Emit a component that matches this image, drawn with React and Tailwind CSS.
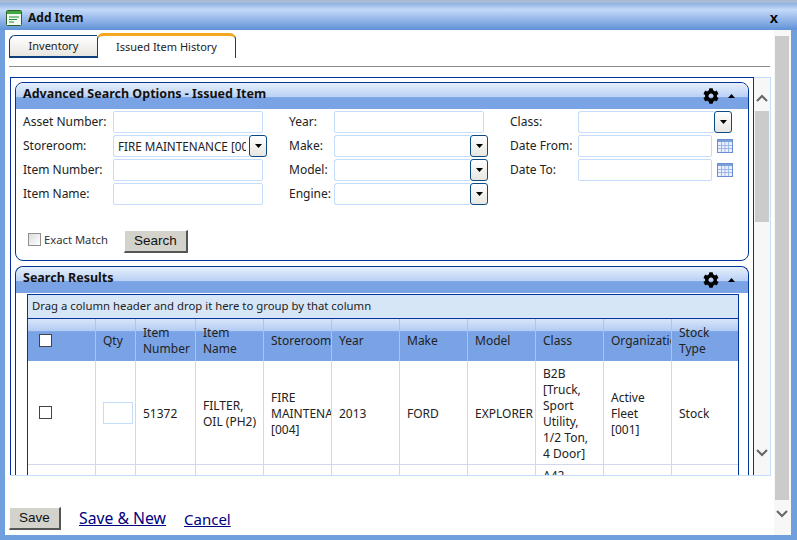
import { FaCog } from 'react-icons/fa';

const COLS = [
  { label: 'Qty', w: 'w-[40px]' },
  { label: 'Item Number', w: 'w-[60px]' },
  { label: 'Item Name', w: 'w-[68px]' },
  { label: 'Storeroom', w: 'w-[68px]' },
  { label: 'Year', w: 'w-[68px]' },
  { label: 'Make', w: 'w-[68px]' },
  { label: 'Model', w: 'w-[68px]' },
  { label: 'Class', w: 'w-[68px]' },
  { label: 'Organization', w: 'w-[68px]' },
  { label: 'Stock Type', w: 'w-[66px]' },
];

const ROW = ['51372', 'FILTER, OIL (PH2)', 'FIRE MAINTENANCE [004]', '2013', 'FORD', 'EXPLORER', 'B2B [Truck, Sport Utility, 1/2 Ton, 4 Door]', 'Active Fleet [001]', 'Stock'];

function Chevron({ up, className }) {
  return (
    <svg width="12" height="8" viewBox="0 0 12 8" className={className}>
      <path d={up ? 'M1 7 L6 2 L11 7' : 'M1 1 L6 6 L11 1'} fill="none" stroke="#666" strokeWidth="2" />
    </svg>
  );
}

function Caret({ up }) {
  return (
    <svg width="7" height="4" viewBox="0 0 7 4">
      <path d={up ? 'M0 4 L3.5 0 L7 4 Z' : 'M0 0 L7 0 L3.5 4 Z'} fill="#000" />
    </svg>
  );
}

function TextBox({ className = 'w-[150px]' }) {
  return <div className={`h-[22px] border border-[#c6dcfb] bg-white rounded-[2px] ${className}`} />;
}

function Combo({ w = 'w-[154px]', children }) {
  return (
    <div className={`h-[22px] flex ${w}`}>
      <div className="flex-1 min-w-0 border border-[#c6dcfb] border-r-0 rounded-l-[3px] pl-1 leading-[20px] text-[11.7px] overflow-hidden whitespace-nowrap">
        <div className="w-[128px] overflow-hidden">{children}</div>
      </div>
      <div className="w-[18px] h-[22px] border border-[#0b4a85] rounded-[3px] bg-gradient-to-b from-white to-[#e8e6e0] flex items-center justify-center">
        <Caret />
      </div>
    </div>
  );
}

function Field({ label, labelW, children }) {
  return (
    <div className="flex items-center h-[22px]">
      <span className={`${labelW} shrink-0 whitespace-nowrap`}>{label}</span>
      {children}
    </div>
  );
}

function CalendarIcon() {
  return (
    <svg width="16" height="14" viewBox="0 0 16 14" className="ml-[5px]">
      <rect x="0.5" y="0.5" width="15" height="13" fill="#eaf0fb" stroke="#6a8fd0" />
      <rect x="1" y="1" width="14" height="2" fill="#7d9fdc" />
      <path d="M1 6.5H15M1 9.5H15M4.5 3V13M8 3V13M11.5 3V13" stroke="#9fb7e6" strokeWidth="1" />
    </svg>
  );
}

function PanelHeader({ title }) {
  return (
    <div className="h-[26px] rounded-t-[8px] bg-[linear-gradient(#e6effb_0%,#b9d1f5_54%,#7aa3e5_56%,#7aa3e5_100%)] flex items-center pl-[7px] pr-[13px] shrink-0">
      <span className="font-bold text-[12.5px] text-[#111] mt-[-4px]">{title}</span>
      <FaCog className="ml-auto text-[16px] text-black" />
      <span className="ml-[9px] flex"><Caret up /></span>
    </div>
  );
}

function WindowIcon() {
  return (
    <svg width="16" height="16" viewBox="0 0 16 16">
      <rect x="0.5" y="0.5" width="15" height="15" rx="1" fill="#f2faf0" stroke="#2f5f2c" />
      <rect x="1" y="1" width="14" height="3" fill="#3fa83f" />
      <path d="M3 7H13M3 9.5H11M3 12H8" stroke="#1f8a3a" strokeWidth="1" />
    </svg>
  );
}

export default function App() {
  return (
    <div className="w-[797px] h-[540px] overflow-hidden bg-[#6f9fdd] flex flex-col text-[12px] text-[#222] font-['Noto_Sans',sans-serif]">
      {/* title bar */}
      <div className="h-[30px] shrink-0 bg-[linear-gradient(#a9bbd4_0%,#a9bbd4_8%,#8fb3e6_12%,#c4daf8_32%,#8db2e8_70%,#5f92d6_100%)] flex items-center pl-[6px] pr-[19px] pt-[5px]">
        <WindowIcon />
        <span className="ml-[6px] font-bold text-[12px] text-[#111]">Add Item</span>
        <span className="ml-auto font-black text-[15px] leading-none text-black font-['Liberation_Sans',sans-serif]">x</span>
      </div>

      <div className="flex-1 min-h-0 flex pl-[5px] pr-[6px] pb-[5px]">
        <div className="flex-1 min-w-0 bg-white flex">
          <div className="flex-1 min-w-0 flex flex-col pl-[4px] pr-[3px] pt-[3px]">
            {/* tabs */}
            <div className="flex h-[25px] items-end shrink-0 text-[11px]">
              <div className="w-[88px] h-[23px] border border-b-2 border-r-0 border-[#0b3f7e] rounded-tl-[6px] bg-gradient-to-b from-white to-[#e8e6df] flex items-center justify-center">Inventory</div>
              <div className="w-[139px] h-[25px] border-r border-l border-[#0b3f7e] border-t-[3px] border-t-[#f5a623] rounded-t-[6px] bg-white flex items-center justify-center">Issued Item History</div>
            </div>
            <div className="mt-[8px] mr-[1px] h-[1px] bg-[#8a8a8a] shrink-0" />

            {/* inner scrolling frame */}
            <div className="mt-[10px] ml-[1px] h-[399px] border-r border-b border-[#c6dcfb] flex overflow-hidden shrink-0">
              <div className="flex-1 min-w-0 border-l border-t border-r border-[#003399] px-[4px] pt-[4px] overflow-hidden flex flex-col">
                {/* search options */}
                <div className="h-[179px] shrink-0 border border-[#003399] rounded-[8px] flex flex-col">
                  <PanelHeader title="Advanced Search Options - Issued Item" />
                  <div className="grid grid-cols-[266px_221px_1fr] pl-[7px] pt-[2px]">
                    <div className="flex flex-col gap-[2px]">
                      <Field label="Asset Number:" labelW="w-[90px]"><TextBox /></Field>
                      <Field label="Storeroom:" labelW="w-[90px]"><Combo>FIRE MAINTENANCE [004]</Combo></Field>
                      <Field label="Item Number:" labelW="w-[90px]"><TextBox /></Field>
                      <Field label="Item Name:" labelW="w-[90px]"><TextBox /></Field>
                    </div>
                    <div className="flex flex-col gap-[2px]">
                      <Field label="Year:" labelW="w-[45px]"><TextBox /></Field>
                      <Field label="Make:" labelW="w-[45px]"><Combo /></Field>
                      <Field label="Model:" labelW="w-[45px]"><Combo /></Field>
                      <Field label="Engine:" labelW="w-[45px]"><Combo /></Field>
                    </div>
                    <div className="flex flex-col gap-[2px]">
                      <Field label="Class:" labelW="w-[68px]"><Combo /></Field>
                      <Field label="Date From:" labelW="w-[68px]"><TextBox className="w-[134px]" /><CalendarIcon /></Field>
                      <Field label="Date To:" labelW="w-[68px]"><TextBox className="w-[134px]" /><CalendarIcon /></Field>
                    </div>
                  </div>
                  <div className="flex items-center mt-[25px] pl-[12px]">
                    <span className="w-[13px] h-[13px] mt-[-5px] border border-[#8e8f8f] bg-gradient-to-br from-[#dcdcdc] to-white" />
                    <span className="ml-[3px] text-[11.25px] text-[#333] mt-[-2px]">Exact Match</span>
                    <div className="ml-[16px] w-[64px] h-[23px] bg-[#d4d3cb] border-r-2 border-b-2 border-r-[#555] border-b-[#555] border-t border-l border-t-white border-l-white flex items-center justify-center text-[13.5px] text-[#111] font-['Liberation_Sans',sans-serif]">Search</div>
                  </div>
                </div>

                {/* results */}
                <div className="mt-[5px] border border-[#003399] border-b-0 rounded-t-[8px] flex-1 min-h-0 flex flex-col overflow-hidden">
                  <PanelHeader title="Search Results" />
                  <div className="mt-[1px] ml-[11px] mr-[9px] flex-1 min-h-0 border border-b-0 border-[#003399] overflow-hidden">
                    <div className="h-[24px] bg-[#d6e6f7] border-b border-[#003399] flex items-center pl-[4px] text-[11.33px] text-[#222] whitespace-nowrap">Drag a column header and drop it here to group by that column</div>
                    <div className="flex h-[42px] bg-[linear-gradient(#d9e6f9_0%,#b3ccf3_28%,#7aa3e5_30%,#7aa3e5_100%)]">
                      <div className="w-[68px] shrink-0 flex items-center pl-[11px] border-r border-[#a9c4ee]">
                        <span className="w-[13px] h-[13px] border border-[#444] bg-white" />
                      </div>
                      {COLS.map((c) => (
                        <div key={c.label} className={`${c.w} shrink-0 border-r border-[#a9c4ee] last:border-r-0 flex items-center pl-[7px] pr-[6px] pt-[2px] leading-[16px] overflow-hidden`}>
                          <span className={c.label === 'Organization' || c.label === 'Storeroom' ? 'whitespace-nowrap' : ''}>{c.label}</span>
                        </div>
                      ))}
                    </div>
                    <div className="flex h-[104px] border-b border-[#d3d7ee]">
                      <div className="w-[68px] shrink-0 flex items-center pl-[11px] border-r border-[#d3d7ee]">
                        <span className="w-[13px] h-[13px] border border-[#444] bg-white" />
                      </div>
                      <div className="w-[40px] shrink-0 border-r border-[#d3d7ee] flex items-center pl-[7px]">
                        <div className="w-[30px] h-[22px] border border-[#c6dcfb]" />
                      </div>
                      {ROW.map((v, i) => (
                        <div key={i} className={`${COLS[i + 1].w} shrink-0 border-r border-[#d3d7ee] last:border-r-0 flex items-center pl-[7px] pr-[6px] pt-[2px] leading-[16px] overflow-hidden`}>
                          <span className="w-full">{i === 2 ? <>FIRE<br /><span className="whitespace-nowrap">MAINTENANCE</span><br />[004]</> : v}</span>
                        </div>
                      ))}
                    </div>
                    <div className="flex h-[40px]">
                      <div className="w-[68px] shrink-0 border-r border-[#d3d7ee]" />
                      <div className="w-[40px] shrink-0 border-r border-[#d3d7ee]" />
                      {COLS.slice(1).map((c) => (
                        <div key={c.label} className={`${c.w} shrink-0 border-r border-[#d3d7ee] last:border-r-0 pl-[7px] pt-[3px] leading-[16px]`}>
                          {c.label === 'Class' ? 'A42' : ''}
                        </div>
                      ))}
                    </div>
                  </div>
                </div>
              </div>

              {/* inner scrollbar */}
              <div className="w-[16px] shrink-0 border-t border-[#c6dcfb] bg-[#f7f7f7] flex flex-col items-center">
                <div className="h-[33px] w-full flex items-end justify-center pb-[9px]"><Chevron up /></div>
                <div className="h-[111px] w-[14px] bg-[#cbcbcb]" />
                <div className="flex-1" />
                <div className="h-[24px] mb-[10px] w-full flex items-center justify-center"><Chevron /></div>
              </div>
            </div>

            {/* footer */}
            <div className="flex items-center mt-[31px] text-[15.75px]">
              <div className="w-[52px] h-[23px] bg-[#d4d3cb] border-r-2 border-b-2 border-r-[#555] border-b-[#555] border-t border-l border-t-white border-l-white flex items-center justify-center text-[13.5px] text-[#111] font-['Liberation_Sans',sans-serif]">Save</div>
              <a className="ml-[18px] underline text-[#000080]">Save &amp; New</a>
              <a className="ml-[18px] text-[15px] underline text-[#000080]">Cancel</a>
            </div>
          </div>

          {/* outer scrollbar */}
          <div className="w-[17px] shrink-0 bg-[#f7f7f7] flex flex-col items-center pt-[6px] pl-[1px] pr-[2px]">
            <div className="h-[464px] w-[14px] shrink-0 bg-[#cbcbcb]" />
            <div className="mt-[10px]"><Chevron /></div>
          </div>
        </div>
      </div>
    </div>
  );
}
